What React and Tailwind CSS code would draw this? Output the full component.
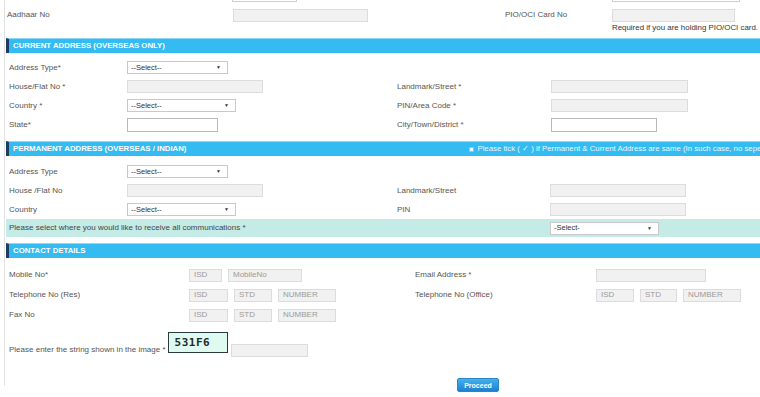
import React from 'react'

const FONT = { fontFamily: '"Liberation Sans", Arial, sans-serif' }

function Label({ children, className = '' }) {
  return <div className={`text-[8px] leading-[10px] text-[#555] whitespace-nowrap ${className}`}>{children}</div>
}

function GreyInput({ w, h = 'h-[13px]', placeholder }) {
  return (
    <div className={`${w} ${h} border border-[#dcdcdc] bg-[#f1f1f1] flex items-center pl-[4px] text-[8px] text-[#9a9a9a]`}>
      {placeholder}
    </div>
  )
}

function WhiteInput({ w, h = 'h-[14px]' }) {
  return <div className={`${w} ${h} border border-[#b9b9b9] bg-white`} />
}

function Select({ w, text = '--Select--' }) {
  return (
    <div className={`${w} h-[13px] bg-white border border-[#c9c9c9] flex items-center justify-between pl-[3px] pr-[6px] text-[7.5px] text-[#333]`}>
      <span>{text}</span>
      <span className="text-[5px] leading-none">▼</span>
    </div>
  )
}

function Header({ children, right }) {
  return (
    <div className="ml-[1px] h-[15px] flex items-center bg-[#33bbf2] border-t border-[#8fd8f6] border-l-[3px] border-l-[#1d3d5e] pl-[4px] overflow-hidden">
      <span className="text-[7.8px] font-bold text-white whitespace-nowrap">{children}</span>
      {right}
    </div>
  )
}

function AddrRow({ left, leftCtl, right, rightCtl, rightLabelW = 'w-[154px]' }) {
  return (
    <div className="h-[19px] flex items-center pl-[4px]">
      <div className="w-[118px]"><Label>{left}</Label></div>
      <div className="w-[270px]">{leftCtl}</div>
      <div className={rightLabelW}>{right && <Label>{right}</Label>}</div>
      <div>{rightCtl}</div>
    </div>
  )
}

function ContactRow({ left, leftCtl, right, rightCtl }) {
  return (
    <div className="h-[20px] flex items-center pl-[4px]">
      <div className="w-[180px]"><Label>{left}</Label></div>
      <div className="w-[226px] flex gap-[6px]">{leftCtl}</div>
      <div className="w-[181px]">{right && <Label>{right}</Label>}</div>
      <div className="flex gap-[6px]">{rightCtl}</div>
    </div>
  )
}

export default function App() {
  return (
    <div className="w-[760px] h-[397px] overflow-hidden bg-white text-[8px] leading-[10px]" style={FONT}>
      <div className="ml-[4px] border-l border-[#e2e2e2] h-full">
        {/* cut-off row above */}
        <div className="-mt-[11px] h-[13px] flex">
          <div className="ml-[227px] w-[65px] h-[13px] border border-[#cfcfcf] bg-white" />
          <div className="ml-[315px] w-[128px] h-[13px] border border-[#cfcfcf] bg-white" />
        </div>

        <div className="mt-[6px] h-[14px] flex items-center pl-[2px]">
          <div className="w-[226px]"><Label>Aadhaar No</Label></div>
          <div className="w-[272px]"><GreyInput w="w-[135px]" /></div>
          <div className="w-[107px]"><Label>PIO/OCI Card No</Label></div>
          <GreyInput w="w-[123px]" />
        </div>
        <div className="pl-[607px] h-[10px] mt-[1px] text-[7.9px] leading-[10px] text-[#333] whitespace-nowrap">
          Required if you are holding PIO/OCI card.
        </div>

        <div className="mt-[5px]">
          <Header>CURRENT ADDRESS (OVERSEAS ONLY)</Header>
        </div>
        <div className="mt-[5px]">
          <AddrRow left="Address Type*" leftCtl={<Select w="w-[101px]" />} />
          <AddrRow left="House/Flat No *" leftCtl={<GreyInput w="w-[136px]" />} right="Landmark/Street *" rightCtl={<GreyInput w="w-[137px]" />} />
          <AddrRow left="Country *" leftCtl={<Select w="w-[109px]" />} right="PIN/Area Code *" rightCtl={<GreyInput w="w-[137px]" />} />
          <AddrRow left="State*" leftCtl={<WhiteInput w="w-[91px]" />} right="City/Town/District *" rightCtl={<WhiteInput w="w-[106px]" />} />
        </div>

        <div className="mt-[7px]">
          <Header
            right={
              <div className="flex items-center gap-[3px] text-[7.8px] text-[#eaf8ff] whitespace-nowrap" style={{ marginLeft: 283 }}>
                <span className="w-[5px] h-[5px] bg-[#e8f4fb] border border-[#9bbfd6] inline-block shrink-0" />
                <span>Please tick ( ✓ ) if Permanent &amp; Current Address are same (In such case, no seperate address proof is required)</span>
              </div>
            }
          >
            PERMANENT ADDRESS (OVERSEAS / INDIAN)
          </Header>
        </div>
        <div className="mt-[6px]">
          <AddrRow left="Address Type" leftCtl={<Select w="w-[101px]" />} />
          <AddrRow left="House /Flat No" leftCtl={<GreyInput w="w-[136px]" />} right="Landmark/Street" rightLabelW="w-[153px]" rightCtl={<GreyInput w="w-[136px]" />} />
          <AddrRow left="Country" leftCtl={<Select w="w-[109px]" />} right="PIN" rightLabelW="w-[153px]" rightCtl={<GreyInput w="w-[136px]" />} />
        </div>
        <div className="ml-[1px] h-[18px] bg-[#c4ebe6] flex items-center pl-[3px]">
          <div className="w-[541px] text-[8px] text-[#444] whitespace-nowrap">
            Please select where you would like to receive all communications *
          </div>
          <Select w="w-[109px]" text="-Select-" />
        </div>

        <div className="mt-[6px]">
          <Header>CONTACT DETAILS</Header>
        </div>
        <div className="mt-[7px]">
          <ContactRow
            left="Mobile No*"
            leftCtl={<><GreyInput w="w-[33px]" placeholder="ISD" /><GreyInput w="w-[74px]" placeholder="MobileNo" /></>}
            right="Email Address *"
            rightCtl={<GreyInput w="w-[110px]" />}
          />
          <ContactRow
            left="Telephone No (Res)"
            leftCtl={<><GreyInput w="w-[39px]" placeholder="ISD" /><GreyInput w="w-[38px]" placeholder="STD" /><GreyInput w="w-[58px]" placeholder="NUMBER" /></>}
            right="Telephone No (Office)"
            rightCtl={<><GreyInput w="w-[38px]" placeholder="ISD" /><GreyInput w="w-[37px]" placeholder="STD" /><GreyInput w="w-[58px]" placeholder="NUMBER" /></>}
          />
          <ContactRow
            left="Fax No"
            leftCtl={<><GreyInput w="w-[39px]" placeholder="ISD" /><GreyInput w="w-[38px]" placeholder="STD" /><GreyInput w="w-[58px]" placeholder="NUMBER" /></>}
          />
        </div>

        <div className="mt-[7px] flex items-start pl-[4px]">
          <div className="mt-[13px] mr-[2px]"><Label>Please enter the string shown in the image *</Label></div>
          <div className="w-[60px] h-[21px] border border-[#2b3a3a] bg-[#dffaf1] pl-[6px] pt-[3px] text-[11px] leading-[13px] font-bold text-[#1d2b2b] tracking-[0.5px]" style={{ fontFamily: '"DejaVu Sans Mono", monospace' }}>
            531F6
          </div>
          <div className="mt-[12px] ml-[3px]"><GreyInput w="w-[77px]" /></div>
        </div>

        <div className="mt-[21px] pl-[452px]">
          <button className="w-[42px] h-[14px] rounded-[2px] bg-gradient-to-b from-[#45b0ec] to-[#1c80d2] border border-[#2a86c9] text-white text-[7px] leading-none font-bold flex items-center justify-center">
            Proceed
          </button>
        </div>
      </div>
    </div>
  )
}
